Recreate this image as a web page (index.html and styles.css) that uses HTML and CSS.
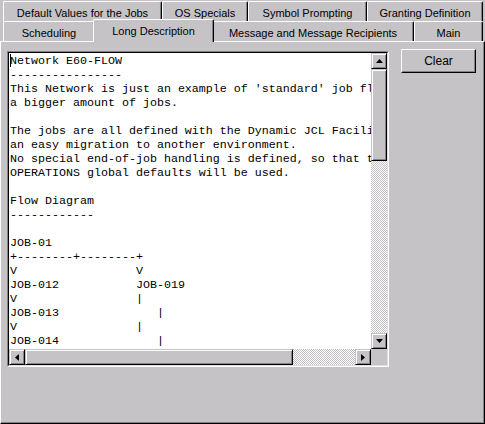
FILE: index.html
```html
<!DOCTYPE html>
<html lang="en">
<head>
    <meta charset="UTF-8">
    <title>Network E60-FLOW</title>
    <link rel="stylesheet" href="styles.css">
</head>
<body>
    <div class="dialog">
        <div class="tabs">
            <div class="tab-row tab-row-back">
                <div class="tab">Default Values for the Jobs</div>
                <div class="tab">OS Specials</div>
                <div class="tab">Symbol Prompting</div>
                <div class="tab">Granting Definition</div>
            </div>
            <div class="tab-row tab-row-front">
                <div class="tab">Scheduling</div>
                <div class="tab tab-active">Long Description</div>
                <div class="tab">Message and Message Recipients</div>
                <div class="tab">Main</div>
            </div>
        </div>

        <div class="panel">
            <div class="memo">
                <div class="memo-inner">
                    <pre class="memo-text"><span class="caret"></span>Network E60-FLOW
----------------
This Network is just an example of 'standard' job flow for
a bigger amount of jobs.

The jobs are all defined with the Dynamic JCL Facility for
an easy migration to another environment.
No special end-of-job handling is defined, so that the
OPERATIONS global defaults will be used.

Flow Diagram
------------

JOB-01
+--------+--------+
V                 V
JOB-012           JOB-019
V                 |
JOB-013              |
V                 |
JOB-014              |
</pre>
                    <div class="vscroll">
                        <div class="sb-btn">
                            <svg width="7" height="4" viewBox="0 0 7 4"><polygon points="3.5,0 7,4 0,4" fill="#000"/></svg>
                        </div>
                        <div class="sb-track">
                            <div class="sb-thumb sb-thumb-v"></div>
                        </div>
                        <div class="sb-btn">
                            <svg width="7" height="4" viewBox="0 0 7 4"><polygon points="0,0 7,0 3.5,4" fill="#000"/></svg>
                        </div>
                    </div>
                    <div class="hscroll">
                        <div class="sb-btn">
                            <svg width="4" height="7" viewBox="0 0 4 7"><polygon points="4,0 4,7 0,3.5" fill="#000"/></svg>
                        </div>
                        <div class="sb-track sb-track-h">
                            <div class="sb-thumb sb-thumb-h"></div>
                        </div>
                        <div class="sb-btn">
                            <svg width="4" height="7" viewBox="0 0 4 7"><polygon points="0,0 4,3.5 0,7" fill="#000"/></svg>
                        </div>
                    </div>
                    <div class="corner"></div>
                </div>
            </div>
            <button class="btn">Clear</button>
        </div>
    </div>
</body>
</html>
```

FILE: styles.css
```css
body {
    margin: 0;
    padding: 0;
    background-color: #c6c3c6;
    font-family: "Liberation Sans", Arial, sans-serif;
    font-size: 11px;
    color: #000;
}
.dialog {
    width: 485px;
    height: 424px;
    display: flex;
    flex-direction: column;
}

/* tabs */
.tabs {
    padding: 1px 0 0 3px;
}
.tab-row {
    display: grid;
    height: 20px;
}
.tab-row-back {
    grid-template-columns: 159px 86px 119px 116px;
}
.tab-row-front {
    grid-template-columns: 92px 117px 202px 69px;
}
.tab {
    display: flex;
    align-items: center;
    justify-content: center;
    padding-top: 2px;
    border-top: 1px solid #fff;
    border-left: 1px solid #fff;
    border-right: 1px solid #000;
    border-radius: 2px 2px 0 0;
    box-shadow: inset -1px 0 #848284;
    background-color: #c6c3c6;
    white-space: nowrap;
}
.tab-active {
    position: relative;
    z-index: 1;
    margin: -2px -2px -1px -2px;
    padding-top: 0;
}

/* page */
.panel {
    flex: 1;
    display: flex;
    align-items: flex-start;
    padding: 7px 0 0 6px;
    border-top: 1px solid #fff;
    border-left: 1px solid #fff;
    border-right: 1px solid #000;
    border-bottom: 1px solid #000;
    box-shadow: inset -1px -1px #848284;
}
.memo {
    margin-top: 2px;
    width: 380px;
    height: 314px;
    border-top: 1px solid #848284;
    border-left: 1px solid #848284;
    border-right: 1px solid #fff;
    border-bottom: 1px solid #fff;
}
.memo-inner {
    height: 312px;
    display: grid;
    grid-template-columns: 362px 16px;
    grid-template-rows: 296px 16px;
    border-top: 1px solid #000;
    border-left: 1px solid #000;
    border-right: 1px solid #dfdfdf;
    border-bottom: 1px solid #dfdfdf;
    box-sizing: border-box;
    height: 314px;
}
.memo-text {
    margin: 0;
    padding: 1px 0 0 1px;
    overflow: hidden;
    background-color: #fff;
    font-family: "Liberation Mono", "Courier New", monospace;
    font-size: 11.67px;
    line-height: 14px;
}
.caret {
    display: inline-block;
    width: 1px;
    height: 13px;
    margin-right: -1px;
    vertical-align: -3px;
    background-color: #000;
}

/* scrollbars */
.vscroll {
    display: flex;
    flex-direction: column;
}
.hscroll {
    display: flex;
}
.sb-btn {
    width: 16px;
    height: 16px;
    box-sizing: border-box;
    display: flex;
    align-items: center;
    justify-content: center;
    background-color: #c6c3c6;
    border: 1px solid;
    border-color: #c6c3c6 #000 #000 #c6c3c6;
    box-shadow: inset 1px 1px #fff, inset -1px -1px #848284;
}
.sb-track {
    flex: 1;
    display: flex;
    flex-direction: column;
    background: repeating-conic-gradient(#fff 0 25%, #c6c3c6 0 50%) 0 0 / 2px 2px;
}
.sb-track-h {
    flex-direction: row;
}
.sb-thumb {
    box-sizing: border-box;
    background-color: #c6c3c6;
    border: 1px solid;
    border-color: #c6c3c6 #000 #000 #c6c3c6;
    box-shadow: inset 1px 1px #fff, inset -1px -1px #848284;
}
.sb-thumb-v {
    height: 92px;
}
.sb-thumb-h {
    width: 268px;
}
.corner {
    background-color: #c6c3c6;
}

.btn {
    margin-left: 12px;
    width: 75px;
    height: 24px;
    padding: 0;
    font-family: "Liberation Sans", Arial, sans-serif;
    font-size: 12px;
    color: #000;
    background-color: #c6c3c6;
    border: 1px solid;
    border-color: #fff #000 #000 #fff;
    box-shadow: inset -1px -1px #848284;
}
```
